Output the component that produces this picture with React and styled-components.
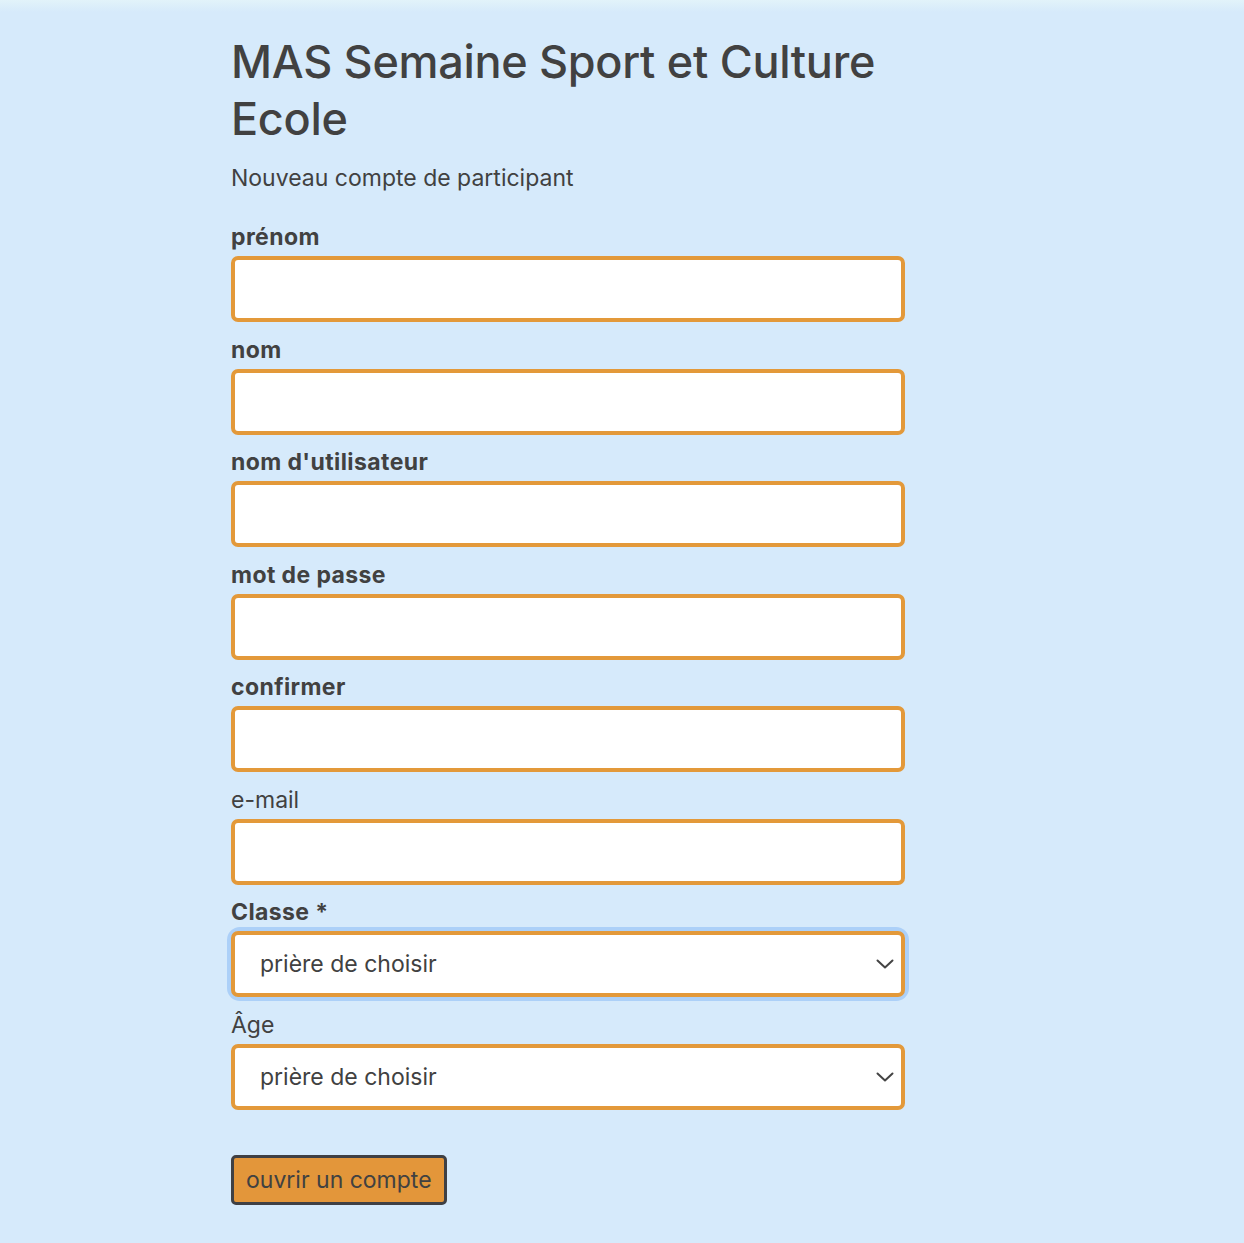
import React from "react";
import styled, { createGlobalStyle } from "styled-components";

const Global = createGlobalStyle`
  html, body { margin: 0; padding: 0; }
  body {
    background: #d6eafb;
    font-family: Inter, "Noto Sans", "Liberation Sans", sans-serif;
    color: #414141;
  }
`;

const Page = styled.div`
  min-height: 1243px;
  background: linear-gradient(to bottom, #e2f3fa 0px, #d6eafb 12px, #d6eafb 100%);
  padding: 33px 0 30px 231px;
  box-sizing: border-box;
`;

const Form = styled.form`
  width: 674px;
  display: flex;
  flex-direction: column;
`;

const Title = styled.h1`
  margin: 0;
  font-size: 45px;
  line-height: 57px;
  font-weight: 500;
  letter-spacing: -0.3px;
  color: #414141;
`;

const Subtitle = styled.p`
  margin: 17px 0 31px;
  font-size: 23px;
  line-height: 28px;
  color: #414141;
`;

const Field = styled.div`
  display: flex;
  flex-direction: column;
  gap: 5px;
  margin-bottom: 13.5px;
`;

const Label = styled.label`
  font-size: 23px;
  line-height: 28px;
  font-weight: ${(p) => (p.$bold ? 700 : 400)};
  letter-spacing: ${(p) => (p.$bold ? "0.4px" : "0")};
  color: #414141;
`;

const Input = styled.input`
  box-sizing: border-box;
  width: 100%;
  height: 66px;
  border: 4px solid #e3993a;
  border-radius: 7px;
  background: #fff;
  font: inherit;
  font-size: 23px;
  padding: 0 25px;
  outline: none;
`;

const SelectWrap = styled.div`
  position: relative;
  border-radius: 9px;
  box-shadow: ${(p) => (p.$focus ? "0 0 0 4px #acd0f8" : "none")};
`;

const Select = styled.select`
  box-sizing: border-box;
  width: 100%;
  height: 66px;
  border: 4px solid #e3993a;
  border-radius: 7px;
  background: #fff;
  font-family: inherit;
  font-size: 23px;
  color: #414141;
  padding: 0 25px;
  appearance: none;
  -webkit-appearance: none;
  outline: none;
`;

const Chevron = styled.svg`
  position: absolute;
  right: 11px;
  top: 50%;
  transform: translateY(-50%);
  pointer-events: none;
`;

const Button = styled.button`
  align-self: flex-start;
  box-sizing: border-box;
  margin-top: 32px;
  height: 50px;
  padding: 0 12px;
  background: #e3963a;
  border: 3px solid #3f4044;
  border-radius: 5px;
  font-family: inherit;
  font-size: 23px;
  color: #414141;
`;

const fields = [
  { label: "prénom", bold: true },
  { label: "nom", bold: true },
  { label: "nom d'utilisateur", bold: true },
  { label: "mot de passe", bold: true, type: "password" },
  { label: "confirmer", bold: true, type: "password" },
  { label: "e-mail", bold: false, type: "email" },
];

function Arrow() {
  return (
    <Chevron width="18" height="12" viewBox="0 0 18 12" fill="none">
      <path d="M1.5 2.5 L9 9.5 L16.5 2.5" stroke="#444" strokeWidth="2" strokeLinecap="round" strokeLinejoin="round" />
    </Chevron>
  );
}

export default function App() {
  return (
    <>
      <Global />
      <Page>
        <Form onSubmit={(e) => e.preventDefault()}>
          <Title>MAS Semaine Sport et Culture Ecole</Title>
          <Subtitle>Nouveau compte de participant</Subtitle>
          {fields.map((f) => (
            <Field key={f.label}>
              <Label $bold={f.bold}>{f.label}</Label>
              <Input type={f.type || "text"} />
            </Field>
          ))}
          <Field>
            <Label $bold>Classe *</Label>
            <SelectWrap $focus>
              <Select defaultValue="">
                <option value="">prière de choisir</option>
              </Select>
              <Arrow />
            </SelectWrap>
          </Field>
          <Field>
            <Label>Âge</Label>
            <SelectWrap>
              <Select defaultValue="">
                <option value="">prière de choisir</option>
              </Select>
              <Arrow />
            </SelectWrap>
          </Field>
          <Button type="submit">ouvrir un compte</Button>
        </Form>
      </Page>
    </>
  );
}
